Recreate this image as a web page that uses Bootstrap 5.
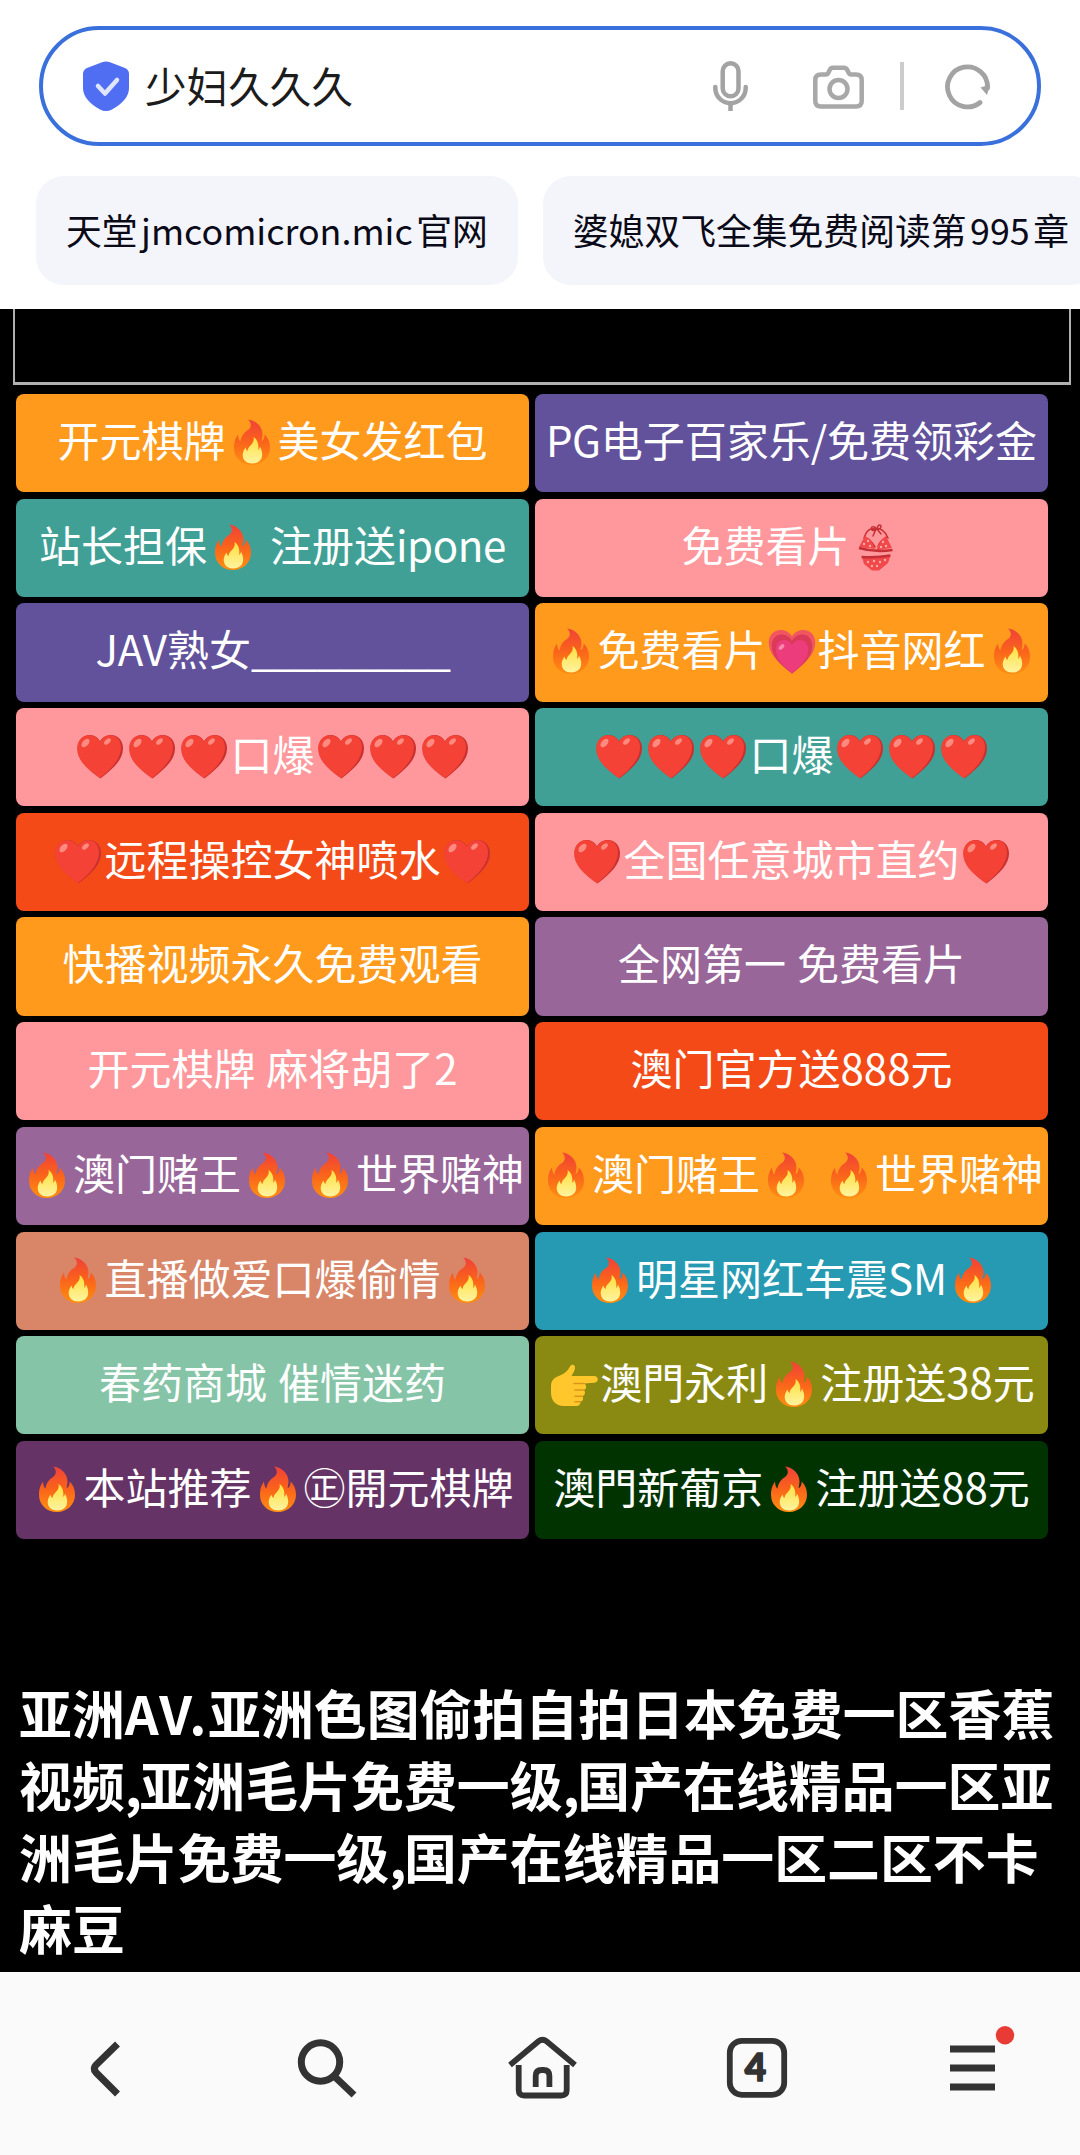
<!DOCTYPE html>
<html lang="zh-CN">
<head>
<meta charset="utf-8">
<meta name="viewport" content="width=device-width, initial-scale=1">
<title>少妇久久久</title>
<link href="https://cdn.jsdelivr.net/npm/bootstrap@5.3.0/dist/css/bootstrap.min.css" rel="stylesheet">
<style>
body{width:1080px;height:2155px;overflow:hidden;background:#fff;font-family:"Noto Sans CJK SC",sans-serif}
.top-area{height:309px;padding-top:26px}
.search-box{margin:0 39px;height:120px;border:4px solid #3a70db;padding-left:40px;padding-right:46px}
.query-text{font-size:41.6px;line-height:60px;padding-bottom:2px;color:#1c1c1c;margin-left:16px}
.mic-icon{margin-right:65px}
.bar-line{width:4px;height:48px;background:#ccc;margin:0 41px 0 36px}
.chips{margin:30px 0 0 36px;gap:25px}
.chip{height:109px;border-radius:28px;background:#f4f5fa;color:#0a0a18;font-size:35.8px;line-height:106px;padding:0 30px 0 30px;white-space:nowrap}
.chip span{margin:0 3.5px}
.site{height:1663px;background:#000}
.frame-box{margin:0 9.5px 0 13px;height:76px;border:2px solid #b0b0b0;border-top:0;border-bottom-width:3px}
.tiles{margin:9px 0 0 16px;grid-template-columns:513px 513px;gap:6.5px 6px}
.tile{height:98.2px;padding-bottom:8px;border-radius:8px;color:#fff;font-size:42px;line-height:90px;word-spacing:1.4px;text-align:center;white-space:nowrap;text-decoration:none;overflow:hidden}
.tile svg{width:52px;height:48px;margin:-10px 0;vertical-align:1px}
.tile .lat{letter-spacing:-.4px}
.tile .uline{letter-spacing:-1.4px}
.c-orange{background:#ff9a1c}.c-purple{background:#62529c}.c-teal{background:#40a096}.c-pink{background:#ff989c}
.c-red{background:#f34a18}.c-violet{background:#996699}.c-salmon{background:#d98568}.c-cyan{background:#269ab3}
.c-mint{background:#85c4a7}.c-olive{background:#8a8a12}.c-plum{background:#663366}.c-forest{background:#003300}
.headline{margin:138px 0 0 19px;color:#fff;font-size:52.9px;line-height:71.8px;font-weight:700;white-space:nowrap}
.headline .comma{letter-spacing:-2.5px}
.headline .lat-wide{letter-spacing:1.6px}
.bottom-bar{height:183px;background:#fafafa;padding-top:7px}
.bottom-bar svg{width:90px;height:72px}
</style>
</head>
<body>
<svg width="0" height="0" class="position-absolute" aria-hidden="true">
  <defs>
    <linearGradient id="gf" x1="0" y1="0" x2="0" y2="1"><stop offset="0" stop-color="#f0413a"/><stop offset=".45" stop-color="#f9601c"/><stop offset="1" stop-color="#ff8f10"/></linearGradient>
    <linearGradient id="gi" x1="0" y1="0" x2="0" y2="1"><stop offset="0" stop-color="#ffe03c"/><stop offset="1" stop-color="#fff3a0"/></linearGradient>
    <symbol id="fire" viewBox="0 0 52 48">
      <path fill="url(#gf)" d="M22 1.500C30 2.500 36 8 36.500 16c.1 3-.8 5-.8 7 1.300-.3 2.800-2.500 3-6.500C42.500 20 44 25 44 30c0 9-7.500 17-18 17S8 39.500 8 30c0-7 2-10.500 4-13.500.2 3 .6 5.500 2.400 7C15.500 17.500 18 14.500 22 12c3.500-2.500 4-7 0-10.500z"/>
      <path fill="url(#gi)" d="M27.500 19c1 4-1 6.500-4 9.500-1 1.200-1.800 2.700-2 4.500-1-.6-1.700-1.800-1.800-3.500-2 2.300-3 5-3 7.500 0 5 4 8.500 9.800 8.500 5.700 0 9.700-3.500 9.700-9 0-3.300-1.200-5.700-2.200-8-.2 1.600-.8 2.800-1.800 3.400.8-5.500-.8-10.400-4.700-12.900z"/>
    </symbol>
    <symbol id="heart" viewBox="0 0 52 48">
      <path fill="#c93030" d="M26.500 46.500C12 36 3.500 27.500 3.500 16.500 3.500 8.500 9 3 15.500 3c5 0 8.500 2.500 10.500 6.500C28 5.500 32 3 37 3c7 0 12 5.500 12 13.500 0 11-9 19.500-22.500 30z"/>
      <path fill="#f44336" d="M25.800 46.300C11.500 36 3.200 27.500 3.200 16.500 3.200 8.500 8.500 3.200 15 3.200c5 0 9 2.500 11 6.800 2-4.300 5.500-6.800 10.500-6.800 6.500 0 10.500 5 10.500 12 0 11-8.500 21-21.200 31.100z"/>
      <ellipse cx="11.500" cy="11" rx="5" ry="3" fill="#ff8a80" transform="rotate(-48 11.500 11)"/>
      <ellipse cx="33.500" cy="9.500" rx="4" ry="2.300" fill="#ff8a80" transform="rotate(-42 33.500 9.500)"/>
    </symbol>
    <symbol id="grow" viewBox="0 0 52 48">
      <path fill="#f25560" d="M26 46.500C10 34 2.800 26 2.800 15.500 2.800 8 8 3 14.500 3c5 0 9.200 2.500 11.500 6.500C28.300 5.500 32.500 3 37.500 3 44 3 49.200 8 49.200 15.500 49.200 26 42 34 26 46.500z"/>
      <path fill="#d83a57" d="M26 46.500C12 36 5.800 28.500 5.800 18.500c0-6.500 4.300-11 9.700-11 4.500 0 8.500 2.500 10.500 6.500 2-4 6-6.500 10.500-6.500 5.400 0 9.700 4.500 9.700 11C46.200 28.500 40 36 26 46.500z"/>
      <path fill="#ec3c7c" d="M26 46.500C15 37 9.800 31 9.800 22.500c0-5.700 3.700-9.500 8.200-9.500 3.800 0 6.500 2 8 5 1.500-3 4.200-5 8-5 4.500 0 8.200 3.800 8.200 9.500C42.200 31 37 37 26 46.500z"/>
      <ellipse cx="15.500" cy="20" rx="3.500" ry="2" fill="#f889ae" transform="rotate(-48 15.500 20)"/>
    </symbol>
    <symbol id="bikini" viewBox="0 0 52 48">
      <g fill="none" stroke="#c62f35" stroke-width="1.500" stroke-linecap="round"><path d="M14 15C16 8 20 5 25 6c5-2 10 2 13 9M25 24c-3-5-7-9-10-9M28 24c1-4 5-8 9-10M27 6c-4-4-7-2-5 1 2 1 4 0 5-1zm0 0c1-5 4-5 4-2-1 2-3 3-4 2zm0 0 4 5M26 6l-3 7"/></g>
      <path fill="#f2484b" d="M9 24 15 13q7 3 10 13zM27 26q2-8 9-13l6 12-15 2zM12 34h28l-2 6-9 7.500h-7L14 41z"/>
      <path d="M9 25q15 4.500 33.500 2M11.500 34q15 1 29-1.500" fill="none" stroke="#c62f35" stroke-width="2.600"/>
      <g fill="#ffaea4"><circle cx="14" cy="21" r="1.200"/><circle cx="18" cy="18" r="1.200"/><circle cx="20" cy="23" r="1.200"/><circle cx="33" cy="19" r="1.200"/><circle cx="36" cy="23" r="1.200"/><circle cx="31" cy="24" r="1.200"/><circle cx="18" cy="39" r="1.200"/><circle cx="24" cy="38" r="1.200"/><circle cx="30" cy="39" r="1.200"/><circle cx="27" cy="43" r="1.200"/><circle cx="22" cy="43" r="1.200"/><circle cx="35" cy="37" r="1.200"/></g>
    </symbol>
    <symbol id="point" viewBox="0 0 52 48">
      <path fill="#e59a1c" d="M12 18h20v25H18z"/>
      <path fill="#ffc72c" d="M3 26c0-6 4-9 9-10.500 5-2 8-5 10-9 1.500-3 5.500-2 5 1.500-.4 3-2 5.500-3.500 8H46c5 0 5 6.500 0 6.800l-10.500.7c3.500 1 3.500 5.500.3 6.500 2 1.500 1.500 5.500-1.500 6.200 1.700 2.300.5 5-2 5.500.5 2.500-1.300 4.300-4.300 4.300H16C7.500 46 3 40 3 33z"/>
      <path d="M35.500 23.500H26M35.800 30H27M34.300 36.200H27M32.300 41.700H27" fill="none" stroke="#dd941d" stroke-width="1.500" stroke-linecap="round"/>
    </symbol>
  </defs>
</svg>

<header class="top-area overflow-hidden">
  <div class="search-box rounded-pill d-flex align-items-center">
    <svg width="46" height="50" viewBox="0 0 46 50"><path fill="#4f6ef2" d="M19 1.300Q23-.5 27 1.300L42 7q4 1.800 4 6v14q0 12-17 21.500-6 3-12 0Q0 39 0 27V13q0-4.200 4-6z"/><path d="m15 25 7 7.500L34 19" fill="none" stroke="#dfe5ff" stroke-width="4.500" stroke-linecap="round" stroke-linejoin="round"/></svg>
    <div class="query-text">少妇久久久</div>
    <svg class="mic-icon ms-auto" width="35" height="50" viewBox="0 0 35 50" fill="none" stroke="#a3a3a3" stroke-width="4.500"><rect x="9.700" y="2.300" width="15.800" height="33" rx="7.900"/><path d="M2.300 26v1a15.200 15.200 0 0 0 30.400 0v-1" stroke-linecap="round"/><path d="M17.500 42v8"/></svg>
    <svg width="51" height="50" viewBox="0 0 51 50" fill="none" stroke="#a8a8a8" stroke-width="4.500" stroke-linejoin="round"><path d="M8 13.500h5q1.500 0 2.500-2l1.200-2.500q1-2.200 3.300-2.200h11q2.300 0 3.300 2.200l1.200 2.500q1 2 2.500 2h5q5.700 0 5.700 5.500v21q0 5.500-5.700 5.500H8q-5.700 0-5.700-5.500V19q0-5.500 5.700-5.500z"/><circle cx="25.500" cy="28" r="9"/></svg>
    <div class="bar-line"></div>
    <svg width="46" height="50" viewBox="0 0 46 50"><path d="M35 41.500A20 20 0 1 1 42.500 27" fill="none" stroke="#a3a3a3" stroke-width="4.800" stroke-linecap="round"/><path d="m35.500 26.500 9.500-3-3 10.500z" fill="#a3a3a3"/></svg>
  </div>
  <div class="chips d-flex">
    <div class="chip flex-shrink-0">天堂<span>jmcomicron.mic</span>官网</div>
    <div class="chip flex-shrink-0">婆媳双飞全集免费阅读第<span>995</span>章</div>
  </div>
</header>

<main class="site overflow-hidden">
  <div class="frame-box"></div>
  <div class="tiles d-grid">
    <a class="tile c-orange">开元棋牌<svg><use href="#fire"/></svg>美女发红包</a>
    <a class="tile c-purple"><span class="lat">PG</span>电子百家乐/免费领彩金</a>
    <a class="tile c-teal">站长担保<svg><use href="#fire"/></svg> 注册送<span class="lat">ipone</span></a>
    <a class="tile c-pink">免费看片<svg><use href="#bikini"/></svg></a>
    <a class="tile c-purple">JAV熟女<span class="uline">_________</span></a>
    <a class="tile c-orange"><svg><use href="#fire"/></svg>免费看片<svg><use href="#grow"/></svg>抖音网红<svg><use href="#fire"/></svg></a>
    <a class="tile c-pink"><svg><use href="#heart"/></svg><svg><use href="#heart"/></svg><svg><use href="#heart"/></svg>口爆<svg><use href="#heart"/></svg><svg><use href="#heart"/></svg><svg><use href="#heart"/></svg></a>
    <a class="tile c-teal"><svg><use href="#heart"/></svg><svg><use href="#heart"/></svg><svg><use href="#heart"/></svg>口爆<svg><use href="#heart"/></svg><svg><use href="#heart"/></svg><svg><use href="#heart"/></svg></a>
    <a class="tile c-red"><svg><use href="#heart"/></svg>远程操控女神喷水<svg><use href="#heart"/></svg></a>
    <a class="tile c-pink"><svg><use href="#heart"/></svg>全国任意城市直约<svg><use href="#heart"/></svg></a>
    <a class="tile c-orange">快播视频永久免费观看</a>
    <a class="tile c-violet">全网第一 免费看片</a>
    <a class="tile c-pink">开元棋牌 麻将胡了2</a>
    <a class="tile c-red">澳门官方送888元</a>
    <a class="tile c-violet"><svg><use href="#fire"/></svg>澳门赌王<svg><use href="#fire"/></svg> <svg><use href="#fire"/></svg>世界赌神</a>
    <a class="tile c-orange"><svg><use href="#fire"/></svg>澳门赌王<svg><use href="#fire"/></svg> <svg><use href="#fire"/></svg>世界赌神</a>
    <a class="tile c-salmon"><svg><use href="#fire"/></svg>直播做爱口爆偷情<svg><use href="#fire"/></svg></a>
    <a class="tile c-cyan"><svg><use href="#fire"/></svg>明星网红车震SM<svg><use href="#fire"/></svg></a>
    <a class="tile c-mint">春药商城 催情迷药</a>
    <a class="tile c-olive"><svg><use href="#point"/></svg>澳門永利<svg><use href="#fire"/></svg>注册送38元</a>
    <a class="tile c-plum"><svg><use href="#fire"/></svg>本站推荐<svg><use href="#fire"/></svg>㊣開元棋牌</a>
    <a class="tile c-forest">澳門新葡京<svg><use href="#fire"/></svg>注册送88元</a>
  </div>
  <h1 class="headline">亚洲<span class="lat-wide">AV.</span>亚洲色图偷拍自拍日本免费一区香蕉<br>视频<span class="comma">,</span>亚洲毛片免费一级<span class="comma">,</span>国产在线精品一区亚<br>洲毛片免费一级<span class="comma">,</span>国产在线精品一区二区不卡<br>麻豆</h1>
</main>

<nav class="bottom-bar d-flex align-items-center">
  <div class="col text-center"><svg viewBox="63 2031 90 72" fill="none" stroke="#333" stroke-width="7"><path d="M117.500 2044 96 2065q-3.500 3.500 0 7.500l21.500 21.500"/></svg></div>
  <div class="col text-center"><svg viewBox="279 2031 90 72" fill="none" stroke="#333" stroke-width="7"><circle cx="320.500" cy="2062" r="19.200"/><path d="m334 2076 20 19"/></svg></div>
  <div class="col text-center"><svg viewBox="495 2031 90 72" fill="none" stroke="#333" stroke-width="5.800"><path d="m510 2065 28.500-23.700q4-3.200 8 0L575 2065"/><path d="M518.700 2065v25q0 5.500 5.500 5.500h37q5.500 0 5.500-5.500v-25"/><path d="M535.700 2087v-11q0-6 6-6h1.700q6 0 6 6v11"/></svg></div>
  <div class="col text-center"><svg viewBox="711 2031 90 72"><rect x="729.800" y="2040.800" width="54.400" height="54" rx="12" fill="none" stroke="#333" stroke-width="5.800"/><text x="755.500" y="2081" text-anchor="middle" font-family="Lato, sans-serif" font-weight="900" font-size="37" fill="#333" stroke="#333" stroke-width="1.500" stroke-linejoin="round">4</text></svg></div>
  <div class="col text-center"><svg viewBox="927 2026 90 82" style="height:82px"><path d="M950 2049h45M950 2068h45M950 2087h45" stroke="#333" stroke-width="7"/><circle cx="1005" cy="2035.300" r="9.200" fill="#e83b36"/></svg></div>
</nav>
<script src="https://cdn.jsdelivr.net/npm/bootstrap@5.3.0/dist/js/bootstrap.bundle.min.js"></script>
</body>
</html>
